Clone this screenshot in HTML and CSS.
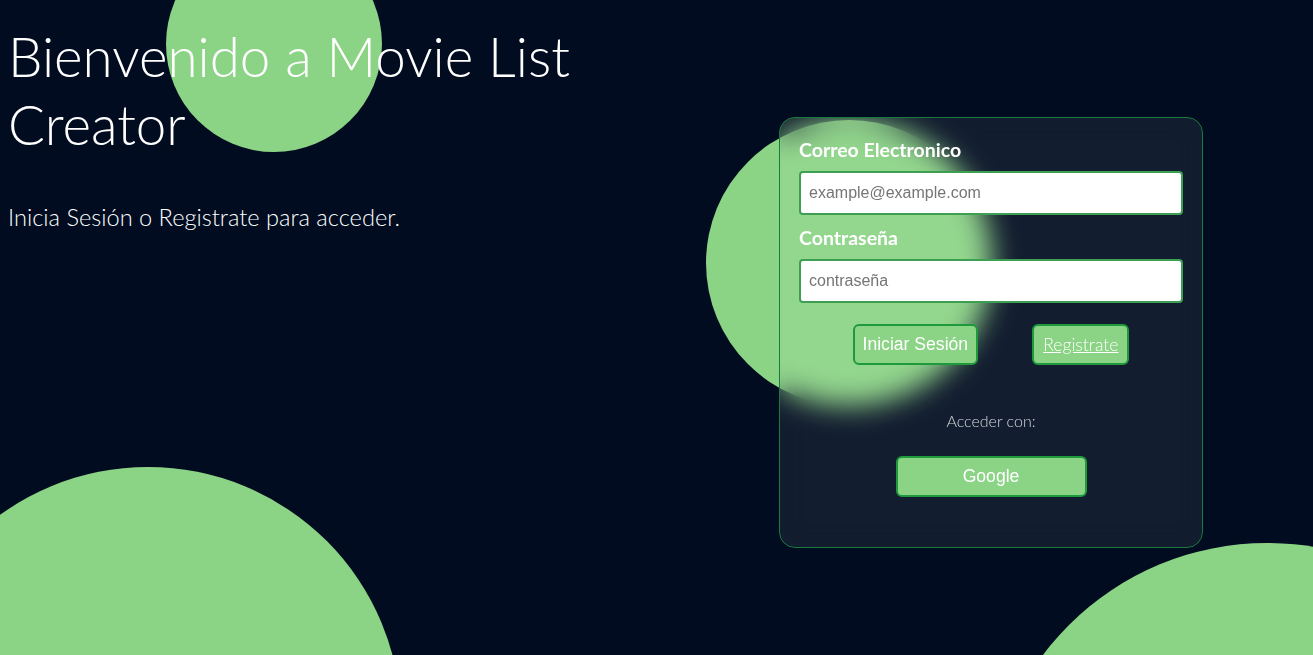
FILE: index.html
```html
<!DOCTYPE html>
<html lang="es">
<head>
<meta charset="utf-8">
<title>Movie List Creator</title>
<link rel="stylesheet" href="styles.css">
</head>
<body>
<div class="blob blob-top"></div>
<div class="blob blob-card"></div>
<div class="blob blob-bl"></div>
<div class="blob blob-br"></div>
<main class="page">
  <section class="intro">
    <h1 class="title">Bienvenido a Movie List Creator</h1>
    <p class="subtitle">Inicia Sesión o Registrate para acceder.</p>
  </section>
  <section class="auth">
    <form class="card">
      <label class="label" for="email">Correo Electronico</label>
      <input class="field" id="email" type="email" placeholder="example@example.com">
      <label class="label" for="pass">Contraseña</label>
      <input class="field" id="pass" type="password" placeholder="contraseña">
      <div class="actions">
        <button class="btn" type="button">Iniciar Sesión</button>
        <button class="btn btn-link" type="button"><a href="#">Registrate</a></button>
      </div>
      <p class="alt">Acceder con:</p>
      <div class="social">
        <button class="btn btn-google" type="button">Google</button>
      </div>
    </form>
  </section>
</main>
</body>
</html>
```
FILE: styles.css
```css
html, body {
  height: 100%;
}
body {
  margin: 0;
  background: #010c20;
  font-family: Lato, "Open Sans", sans-serif;
  color: #fff;
  overflow: hidden;
  position: relative;
}
.blob {
  position: absolute;
  border-radius: 50%;
  background: #8bd385;
  z-index: 0;
}
.blob-top {
  width: 216px;
  height: 216px;
  left: 166px;
  top: -64px;
}
.blob-card {
  width: 286px;
  height: 286px;
  left: 706px;
  top: 120px;
}
.blob-bl {
  width: 506px;
  height: 506px;
  left: -105px;
  top: 467px;
}
.blob-br {
  width: 560px;
  height: 560px;
  left: 987px;
  top: 543px;
}
.page {
  position: relative;
  z-index: 1;
  display: flex;
  align-items: flex-start;
}
.intro {
  width: 600px;
  padding-left: 8px;
}
.title {
  margin: 22px 0 0;
  font-size: 54.7px;
  font-weight: 300;
  line-height: 68px;
}
.subtitle {
  margin: 45px 0 0;
  font-size: 23.6px;
  font-weight: 300;
  line-height: 28px;
  color: #fff;
}
.auth {
  margin-left: 171px;
  margin-top: 117px;
}
.card {
  box-sizing: border-box;
  width: 424px;
  height: 431px;
  padding: 20px 19px 0;
  border: 1px solid #177a3e;
  border-radius: 16px;
  background: rgba(255, 255, 255, 0.07);
  backdrop-filter: blur(14px);
  display: flex;
  flex-direction: column;
}
.label {
  font-size: 19.5px;
  font-weight: 700;
  line-height: 23px;
  margin-bottom: 10px;
}
.field {
  box-sizing: border-box;
  width: 100%;
  height: 44px;
  margin: 0 0 11px;
  padding: 0 8px;
  border: 2px solid #3c9f52;
  border-radius: 4px;
  background: #fff;
  font-family: "Liberation Sans", Arial, sans-serif;
  font-size: 16px;
  color: #222;
  outline: none;
}
.field::placeholder {
  color: #757575;
}
.actions {
  display: flex;
  justify-content: center;
  gap: 54px;
  margin-top: 10px;
}
.btn {
  box-sizing: border-box;
  height: 41px;
  padding: 0 8px;
  border: 2px solid #1e9a3c;
  border-radius: 6px;
  background: #8bd385;
  color: #fff;
  font-family: "Liberation Sans", Arial, sans-serif;
  font-size: 17.6px;
  cursor: pointer;
}
.btn-link {
  padding: 0 9px;
}
.btn-link a {
  color: #fff;
  font-family: Lato, sans-serif;
  font-weight: 300;
  font-size: 17.6px;
  text-decoration: underline;
}
.alt {
  margin: 46px 0 0;
  text-align: center;
  font-size: 16px;
  font-weight: 300;
  color: #d4d7dd;
  line-height: 20px;
}
.social {
  display: flex;
  justify-content: center;
  margin-top: 25px;
}
.btn-google {
  width: 191px;
}
```
